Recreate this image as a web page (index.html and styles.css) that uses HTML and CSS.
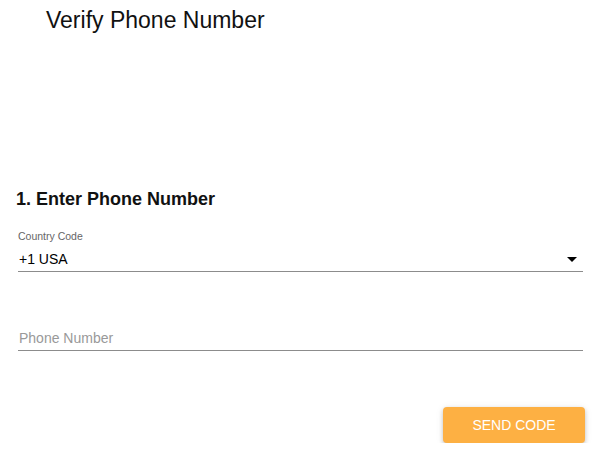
FILE: index.html
```html
<!DOCTYPE html>
<html lang="en">

<head>
    <meta charset="UTF-8" />
    <meta name="viewport" content="width=device-width, initial-scale=1.0" />
    <title>Verify Phone Number</title>
    <link rel="stylesheet" href="styles.css">
</head>

<body>
    <h1 class="title">Verify Phone Number</h1>

    <div class="step">
        <h2>1. Enter Phone Number</h2>

        <div class="field select-field">
            <label>Country Code</label>
            <div class="select-value">
                <span>+1 USA</span>
                <svg class="arrow" width="10" height="5" viewBox="0 0 10 5">
                    <path d="M0 0 L10 0 L5 5 Z" fill="#000" />
                </svg>
            </div>
        </div>

        <div class="field text-field">
            <input type="text" placeholder="Phone Number" />
        </div>

        <div class="actions">
            <button class="send">SEND CODE</button>
        </div>
    </div>
</body>

</html>
```

FILE: styles.css
```css
body {
    font-family: "Liberation Sans", Arial, sans-serif;
    margin: 0;
    padding: 0 10px 0 16px;
    background: #fff;
    color: #000;
}

.title {
    margin: 0;
    padding: 7px 0 0 30px;
    font-size: 23px;
    font-weight: normal;
    color: #111;
}

.step {
    padding-top: 155px;
}

.step h2 {
    margin: 0;
    font-size: 18px;
    font-weight: bold;
    color: #111;
}

.field {
    margin-left: 2px;
    margin-right: 2px;
    border-bottom: 1px solid #8c8c8c;
}

.select-field {
    margin-top: 20px;
}

.select-field label {
    display: block;
    font-size: 10.5px;
    color: #666;
    line-height: 12px;
}

.select-value {
    display: flex;
    justify-content: space-between;
    align-items: center;
    font-size: 14px;
    padding: 9px 6px 4px 1px;
}

.text-field {
    margin-top: 57px;
}

.text-field input {
    border: none;
    outline: none;
    width: 100%;
    padding: 0 0 4px 1px;
    font-family: inherit;
    font-size: 14px;
    background: transparent;
}

.text-field input::placeholder {
    color: #999;
}

.actions {
    display: flex;
    justify-content: flex-end;
    margin-top: 56px;
}

.send {
    width: 142px;
    height: 36px;
    border: none;
    border-radius: 4px;
    background-color: #fdb043;
    color: #fff;
    font-family: inherit;
    font-size: 14px;
    cursor: pointer;
    box-shadow: 0 2px 4px rgba(0, 0, 0, 0.2), 0 1px 8px rgba(0, 0, 0, 0.08);
}
```
